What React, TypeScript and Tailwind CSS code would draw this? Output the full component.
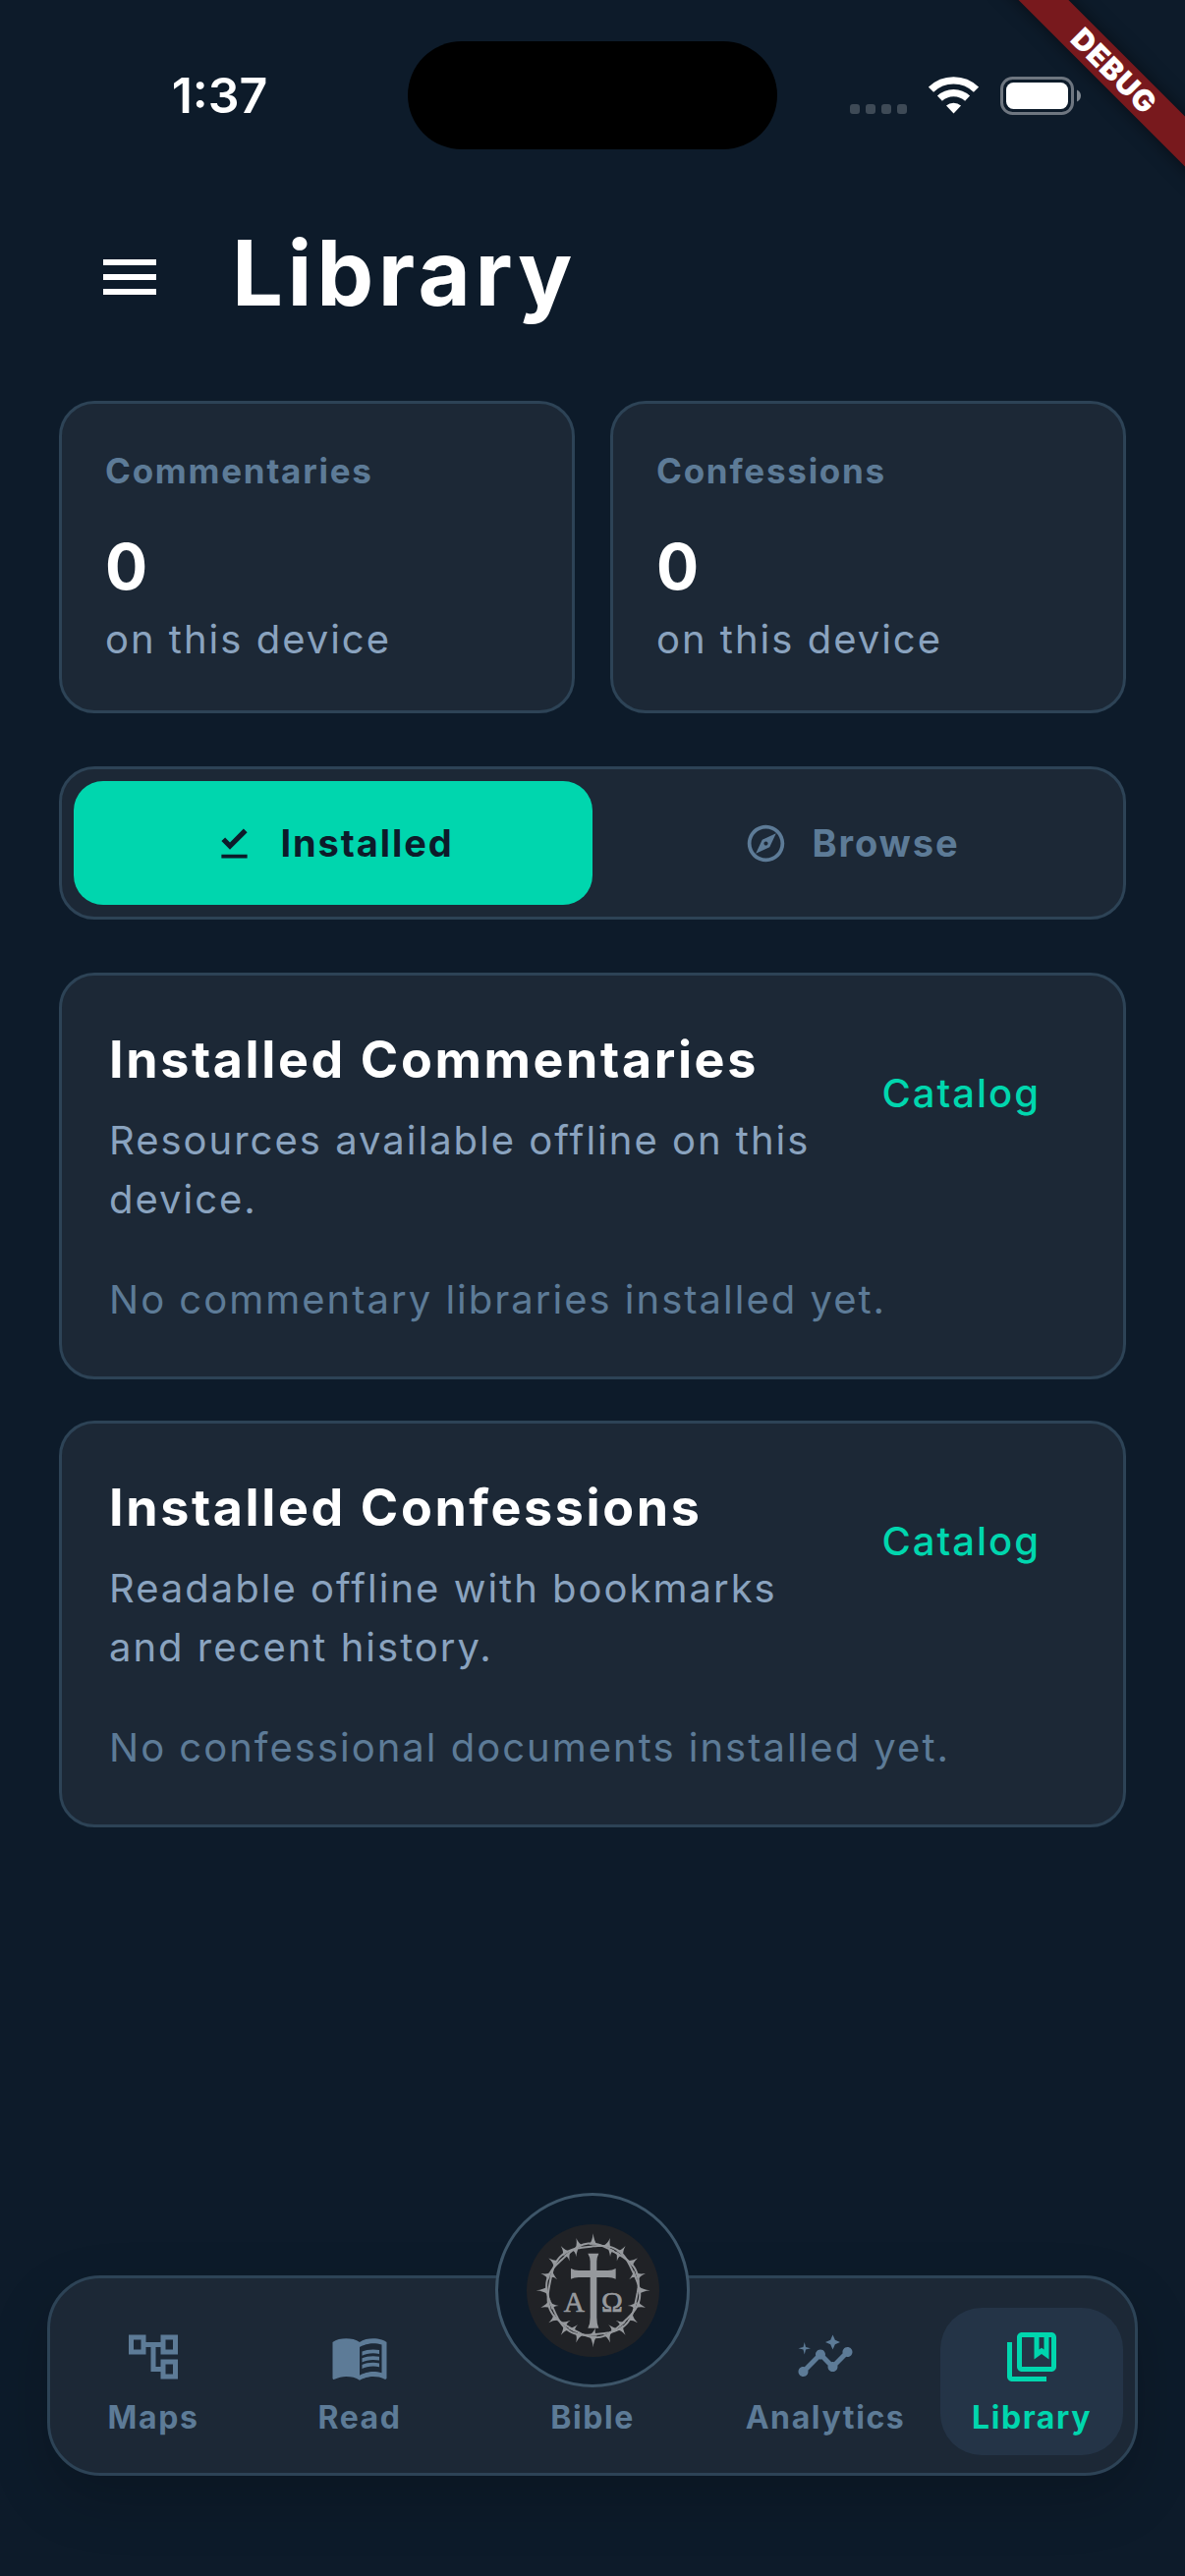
import { useState } from "react";
import type { IconType } from "react-icons";
import {
  MdInsights,
  MdMenu,
  MdMenuBook,
  MdOutlineAccountTree,
  MdOutlineCollectionsBookmark,
  MdOutlineExplore,
} from "react-icons/md";

function DownloadDoneIcon({ size }: { size: number }) {
  return (
    <svg width={size} height={size} viewBox="0 0 24 24" fill="currentColor" aria-hidden>
      <path d="M5 18h14v2H5v-2zm4.600-2.700L5 10.700l2-1.900 2.600 2.600L17 4l2 2-9.400 9.300z" />
    </svg>
  );
}

const stats = [
  { label: "Commentaries", count: 0 },
  { label: "Confessions", count: 0 },
];

const tabs = [
  { id: "installed", label: "Installed", Icon: DownloadDoneIcon },
  { id: "browse", label: "Browse", Icon: MdOutlineExplore },
];

const sections = [
  {
    title: "Installed Commentaries",
    description: "Resources available offline on this device.",
    empty: "No commentary libraries installed yet.",
  },
  {
    title: "Installed Confessions",
    description: "Readable offline with bookmarks and recent history.",
    empty: "No confessional documents installed yet.",
  },
];

function StatusBar() {
  return (
    <div className="flex pt-[42px]">
      <div className="flex flex-1 items-center justify-center pl-8 text-[50px] font-semibold leading-none text-white">
        1:37
      </div>
      <div className="h-[110px] w-[376px] rounded-full bg-black" />
      <div className="flex flex-1 items-center justify-center gap-[22px] pr-8">
        <svg width="58" height="38" viewBox="0 0 58 38" fill="#3e4a56" aria-hidden>
          <rect x="0" y="28" width="10" height="10" rx="3" />
          <rect x="16" y="28" width="10" height="10" rx="3" />
          <rect x="32" y="28" width="10" height="10" rx="3" />
          <rect x="48" y="28" width="10" height="10" rx="3" />
        </svg>
        <svg width="51" height="38" viewBox="0 0 51 38" fill="none" aria-hidden>
          <path d="M2.5 13.2a33 33 0 0 1 46 0" stroke="#fff" strokeWidth="7.4" />
          <path d="M11.4 22.2a20.5 20.5 0 0 1 28.2 0" stroke="#fff" strokeWidth="7.2" />
          <path d="M25.5 37.6 18 29.6a11 11 0 0 1 15 0Z" fill="#fff" />
        </svg>
        <svg width="82" height="39" viewBox="0 0 82 39" aria-hidden>
          <rect x="1.5" y="1.5" width="72" height="36" rx="11" fill="none" stroke="#6e7680" strokeWidth="3" />
          <rect x="6" y="6" width="63" height="27" rx="7.5" fill="#fff" />
          <path d="M78 13.5c2.400 1 4 3.200 4 6s-1.600 5-4 6Z" fill="#7f8790" />
        </svg>
      </div>
    </div>
  );
}

function DebugBanner() {
  return (
    <div aria-hidden className="pointer-events-none absolute right-0 top-0 h-60 w-60 overflow-hidden">
      <div className="absolute left-[18px] top-[54px] flex h-9 w-[300px] rotate-45 items-center justify-center bg-[#78191d] text-[30px] font-black leading-none tracking-wide text-white shadow-[0_0_18px_rgba(0,0,0,0.5)]">
        DEBUG
      </div>
    </div>
  );
}

function StatCard({ label, count }: { label: string; count: number }) {
  return (
    <div className="flex-1 rounded-[36px] border-3 border-[#2d4356] bg-[#1c2836] px-11 py-[42px]">
      <div className="text-[35px] font-bold leading-[52px] tracking-wider text-[#5d7b97]">{label}</div>
      <div className="mt-7 text-[64px] font-bold leading-[88px] text-white">{count}</div>
      <div className="text-[40px] leading-[60px] tracking-wider text-[#8aa3bf]">on this device</div>
    </div>
  );
}

function SectionCard({ title, description, empty }: (typeof sections)[number]) {
  return (
    <section className="rounded-[36px] border-3 border-[#2d4356] bg-[#1c2836] p-12">
      <div className="flex items-start">
        <div className="flex-1">
          <h2 className="text-[52px] font-bold leading-[76px] tracking-wider text-white">{title}</h2>
          <p className="mt-3.5 text-[40px] leading-[60px] tracking-wider text-[#8aa3bf]">{description}</p>
        </div>
        <button type="button" className="h-36 px-9 text-[40px] font-medium tracking-wider text-[#00d6ae]">
          Catalog
        </button>
      </div>
      <p className="mt-[42px] text-[40px] leading-[60px] tracking-wider text-[#5d7b97]">{empty}</p>
    </section>
  );
}

const CX = 219;
const CY = 218;

function polar(deg: number, r: number) {
  const a = (deg * Math.PI) / 180;
  return `${(CX + r * Math.cos(a)).toFixed(1)} ${(CY + r * Math.sin(a)).toFixed(1)}`;
}

// one strand of the woven crown
function strand(phase: number) {
  const points: string[] = [];
  for (let d = 0; d < 360; d += 3) {
    points.push(polar(d, 139 + 5 * Math.sin((d * 5 * Math.PI) / 180 + phase)));
  }
  return `M${points.join("L")}Z`;
}

function thorn(deg: number, base: number, tip: number, lean = 0) {
  const mid = base + (tip - base) * 0.3;
  return `M${polar(deg - 5, base)}Q${polar(deg - 1, mid)} ${polar(deg + lean, tip)}Q${polar(deg + 1, mid)} ${polar(deg + 5, base)}Z`;
}

const outerThorns = Array.from({ length: 20 }, (_, i) => i * 18);
const innerThorns = [20, 49, 62, 90, 118, 131, 160, 201, 235, 247, 293, 305, 339];

function CrownLogo() {
  return (
    <svg viewBox="16 16 405 405" className="size-[135px]" aria-hidden>
      <circle cx="218.500" cy="218.500" r="202.500" fill="#202226" />
      <g fill="#96999d">
        <path d={strand(0.6)} fill="none" stroke="#96999d" strokeWidth="6" />
        <path d={strand(3.7)} fill="none" stroke="#96999d" strokeWidth="6" />
        {outerThorns.map((d) => (
          <path key={d} d={thorn(d, 140, d % 90 === 0 ? 174 : 168)} />
        ))}
        {innerThorns.map((d) => (
          <path key={d} d={thorn(d, 139, 115, d < 90 || d > 270 ? 4 : -4)} />
        ))}
        <path d="M203 105h33q-6 12-6 24v28h34q14 0 24-6v32q-10-5-24-5h-34v122q0 20 6 33h-33q7-13 7-33V178h-35q-14 0-24 5v-32q10 6 24 6h35v-28q0-12-7-24Z" />
        <g fontFamily="'Liberation Serif', serif" fontSize="88" stroke="#96999d" strokeWidth="2" textAnchor="middle">
          <text x="161" y="284">Α</text>
          <text x="277" y="284">Ω</text>
        </g>
      </g>
    </svg>
  );
}

function NavItem({ label, Icon, active = false }: { label: string; Icon: IconType; active?: boolean }) {
  return (
    <a
      href={`#${label.toLowerCase()}`}
      aria-current={active ? "page" : undefined}
      className={`mx-3 flex h-[150px] flex-1 flex-col items-center gap-3 rounded-[42px] pt-5 ${
        active ? "bg-[#243447] text-[#00d6ae]" : "text-[#5d7b97]"
      }`}
    >
      <Icon size={60} />
      <span className="text-[32px] font-bold leading-10 tracking-wider">{label}</span>
    </a>
  );
}

function BottomNav() {
  return (
    <nav className="mx-12 mb-[102px] mt-auto flex h-[204px] rounded-[54px] border-3 border-[#2d4356] bg-[#1c2836] pt-[30px] shadow-[0_24px_60px_rgba(0,0,0,0.180)]">
      <NavItem label="Maps" Icon={MdOutlineAccountTree} />
      <NavItem label="Read" Icon={MdMenuBook} />
      <a href="#bible" className="relative flex h-[150px] w-[264px] flex-col items-center justify-end pb-[18px] text-[#5d7b97]">
        <span className="absolute -top-[117px] flex size-[198px] items-center justify-center rounded-full border-3 border-[#3d5568] bg-[#0d1b2a]">
          <CrownLogo />
        </span>
        <span className="text-[32px] font-bold leading-10 tracking-wider">Bible</span>
      </a>
      <NavItem label="Analytics" Icon={MdInsights} />
      <NavItem label="Library" Icon={MdOutlineCollectionsBookmark} active />
    </nav>
  );
}

export default function App() {
  const [tab, setTab] = useState("installed");

  return (
    <div className="relative flex min-h-screen flex-col bg-[#0d1b2a] font-['Inter',sans-serif]">
      <StatusBar />

      <header className="mt-[66px] flex items-center gap-[68px] px-24">
        <button type="button" aria-label="Open menu" className="mt-2 text-white">
          <MdMenu size={72} />
        </button>
        <h1 className="text-[92px] font-bold leading-[120px] tracking-wider text-white">Library</h1>
      </header>

      <main className="mt-[70px] px-[60px] pb-12">
        <div className="flex gap-9">
          {stats.map((s) => (
            <StatCard key={s.label} {...s} />
          ))}
        </div>

        <div role="tablist" className="mt-[54px] flex rounded-[36px] border-3 border-[#2d4356] bg-[#1c2836] p-3">
          {tabs.map(({ id, label, Icon }) => (
            <button
              key={id}
              type="button"
              role="tab"
              aria-selected={tab === id}
              onClick={() => setTab(id)}
              className={`flex h-[126px] flex-1 items-center justify-center gap-6 rounded-[30px] text-[38px] font-bold tracking-wider ${
                tab === id ? "bg-[#00d6ae] text-[#0d1b2a]" : "text-[#5d7b97]"
              }`}
            >
              <Icon size={45} />
              {label}
            </button>
          ))}
        </div>

        <div className="mt-[54px] flex flex-col gap-[42px]">
          {sections.map((s) => (
            <SectionCard key={s.title} {...s} />
          ))}
        </div>
      </main>

      <BottomNav />
      <DebugBanner />
    </div>
  );
}
